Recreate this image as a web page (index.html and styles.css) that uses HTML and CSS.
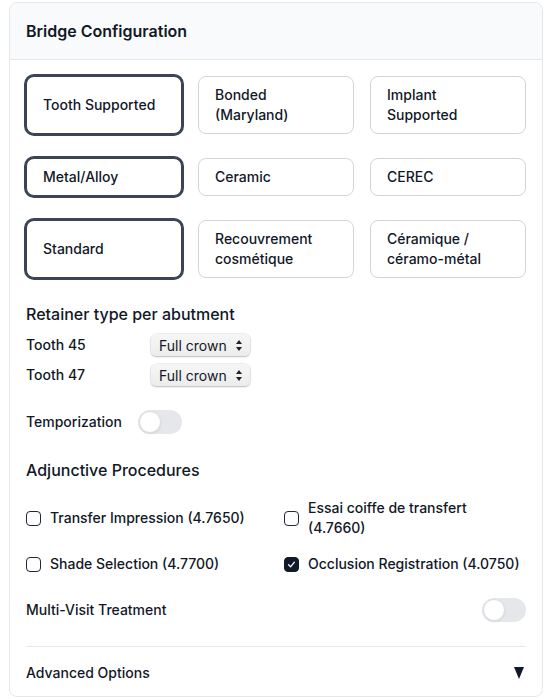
FILE: index.html
```html
<!DOCTYPE html>
<html lang="en">
<head>
<meta charset="utf-8">
<title>Bridge Configuration</title>
<link rel="stylesheet" href="styles.css">
</head>
<body>
<div class="card">
  <div class="card-header">
    <h2 class="card-title">Bridge Configuration</h2>
  </div>
  <div class="card-body">
    <div class="option-grid">
      <button class="option selected">Tooth Supported</button>
      <button class="option">Bonded<br>(Maryland)</button>
      <button class="option">Implant<br>Supported</button>
    </div>
    <div class="option-grid">
      <button class="option selected">Metal/Alloy</button>
      <button class="option">Ceramic</button>
      <button class="option">CEREC</button>
    </div>
    <div class="option-grid">
      <button class="option selected">Standard</button>
      <button class="option">Recouvrement<br>cosmétique</button>
      <button class="option">Céramique /<br>céramo-métal</button>
    </div>

    <section class="retainers">
      <h3 class="section-title">Retainer type per abutment</h3>
      <div class="retainer-row">
        <span class="retainer-label">Tooth 45</span>
        <span class="select-wrap">
          <select class="retainer-select"><option>Full crown</option></select>
          <svg class="select-arrows" width="6" height="11" viewBox="0 0 6 11"><polygon points="3,0 6,4 0,4" /><polygon points="0,7 6,7 3,11" /></svg>
        </span>
      </div>
      <div class="retainer-row">
        <span class="retainer-label">Tooth 47</span>
        <span class="select-wrap">
          <select class="retainer-select"><option>Full crown</option></select>
          <svg class="select-arrows" width="6" height="11" viewBox="0 0 6 11"><polygon points="3,0 6,4 0,4" /><polygon points="0,7 6,7 3,11" /></svg>
        </span>
      </div>
    </section>

    <div class="toggle-row inline">
      <span class="row-label">Temporization</span>
      <span class="toggle"><span class="knob"></span></span>
    </div>

    <section class="adjunctive">
      <h3 class="section-title">Adjunctive Procedures</h3>
      <div class="check-grid">
        <label class="check-item"><span class="checkbox"></span><span>Transfer Impression (4.7650)</span></label>
        <label class="check-item"><span class="checkbox"></span><span>Essai coiffe de transfert<br>(4.7660)</span></label>
        <label class="check-item"><span class="checkbox"></span><span>Shade Selection (4.7700)</span></label>
        <label class="check-item"><span class="checkbox checked"><svg width="9" height="9" viewBox="0 0 9 9"><polyline points="1.6,4.8 3.6,6.8 7.4,2.2" fill="none" stroke="#fff" stroke-width="1.3" stroke-linecap="round" stroke-linejoin="round"/></svg></span><span>Occlusion Registration (4.0750)</span></label>
      </div>
    </section>

    <div class="toggle-row spread">
      <span class="row-label">Multi-Visit Treatment</span>
      <span class="toggle"><span class="knob"></span></span>
    </div>

    <div class="advanced">
      <span class="row-label">Advanced Options</span>
      <svg class="caret" width="10" height="12" viewBox="0 0 10 12"><polygon points="0,0 10,0 5,12" /></svg>
    </div>
  </div>
</div>
</body>
</html>
```

FILE: styles.css
```css
* {
  box-sizing: border-box;
}

body {
  margin: 0;
  background: #ffffff;
  font-family: Inter, "Noto Sans", "DejaVu Sans", sans-serif;
  color: #111827;
}

.card {
  margin: 2px 0 0 9px;
  width: 534px;
  border: 1px solid #e5e7eb;
  border-radius: 8px;
  overflow: hidden;
  background: #ffffff;
}

.card-header {
  background: #f9fafb;
  border-bottom: 1px solid #e5e7eb;
  padding: 16px;
}

.card-title {
  margin: 0;
  font-size: 16px;
  line-height: 24px;
  font-weight: 600;
}

.card-body {
  padding: 16px 16px 13px;
  display: flex;
  flex-direction: column;
  gap: 24px;
}

.option-grid {
  display: grid;
  grid-template-columns: repeat(3, 1fr);
  gap: 16px;
}

.option {
  font-family: inherit;
  font-size: 14px;
  line-height: 20px;
  font-weight: 500;
  color: #111827;
  text-align: left;
  background: #ffffff;
  border: 1px solid #d4d4d8;
  border-radius: 8px;
  padding: 8px 16px;
  display: flex;
  align-items: center;
  margin: 0;
}

.option.selected {
  border-color: #3b4454;
  box-shadow: 0 0 0 2px #3b4454;
}

.section-title {
  margin: 0;
  font-size: 16px;
  line-height: 24px;
  font-weight: 500;
}

.retainers {
  display: flex;
  flex-direction: column;
  gap: 8px;
}

.retainer-row {
  display: grid;
  grid-template-columns: 125px auto;
  align-items: center;
  justify-content: start;
  height: 22px;
}

.retainer-label,
.row-label {
  font-size: 14px;
  line-height: 20px;
  font-weight: 500;
}

.select-wrap {
  position: relative;
  display: inline-block;
  width: 99px;
  height: 22px;
}

.retainer-select {
  appearance: none;
  -webkit-appearance: none;
  width: 99px;
  height: 22px;
  border: none;
  border-radius: 5px;
  background: linear-gradient(#f6f6f6, #ececec);
  box-shadow: 0 0 0 0.5px rgba(0, 0, 0, 0.12), 0 1px 2px rgba(0, 0, 0, 0.22);
  font-family: inherit;
  font-size: 14px;
  color: #111827;
  padding: 0 0 0 8px;
  margin: 0;
}

.select-arrows {
  position: absolute;
  right: 8px;
  top: 6px;
  fill: #222;
}

.toggle-row {
  display: flex;
  align-items: center;
  height: 24px;
}

.toggle-row.inline {
  gap: 16px;
}

.toggle-row.spread {
  justify-content: space-between;
}

.toggle {
  position: relative;
  width: 44px;
  height: 24px;
  border-radius: 12px;
  background: #e5e7eb;
  flex: none;
}

.knob {
  position: absolute;
  left: 1px;
  top: 1px;
  width: 22px;
  height: 22px;
  border-radius: 50%;
  background: #ffffff;
  border: 1px solid #dcdfe4;
  box-shadow: 0 1px 2px rgba(0, 0, 0, 0.08);
}

.adjunctive {
  display: flex;
  flex-direction: column;
  gap: 16px;
}

.check-grid {
  display: grid;
  grid-template-columns: 1fr 1fr;
  column-gap: 16px;
  row-gap: 16px;
}

.check-item {
  display: flex;
  align-items: center;
  gap: 9px;
  font-size: 14px;
  line-height: 20px;
  font-weight: 500;
}

.checkbox {
  width: 15px;
  height: 15px;
  flex: none;
  border: 1.2px solid #1f2937;
  border-radius: 4px;
  background: #ffffff;
  display: flex;
  align-items: center;
  justify-content: center;
}

.checkbox.checked {
  background: #111827;
  border-color: #111827;
}

.advanced {
  border-top: 1px solid #e5e7eb;
  padding-top: 16px;
  display: flex;
  justify-content: space-between;
  align-items: center;
  height: 37px;
}

.caret {
  fill: #111827;
  margin-right: 2px;
}
```
